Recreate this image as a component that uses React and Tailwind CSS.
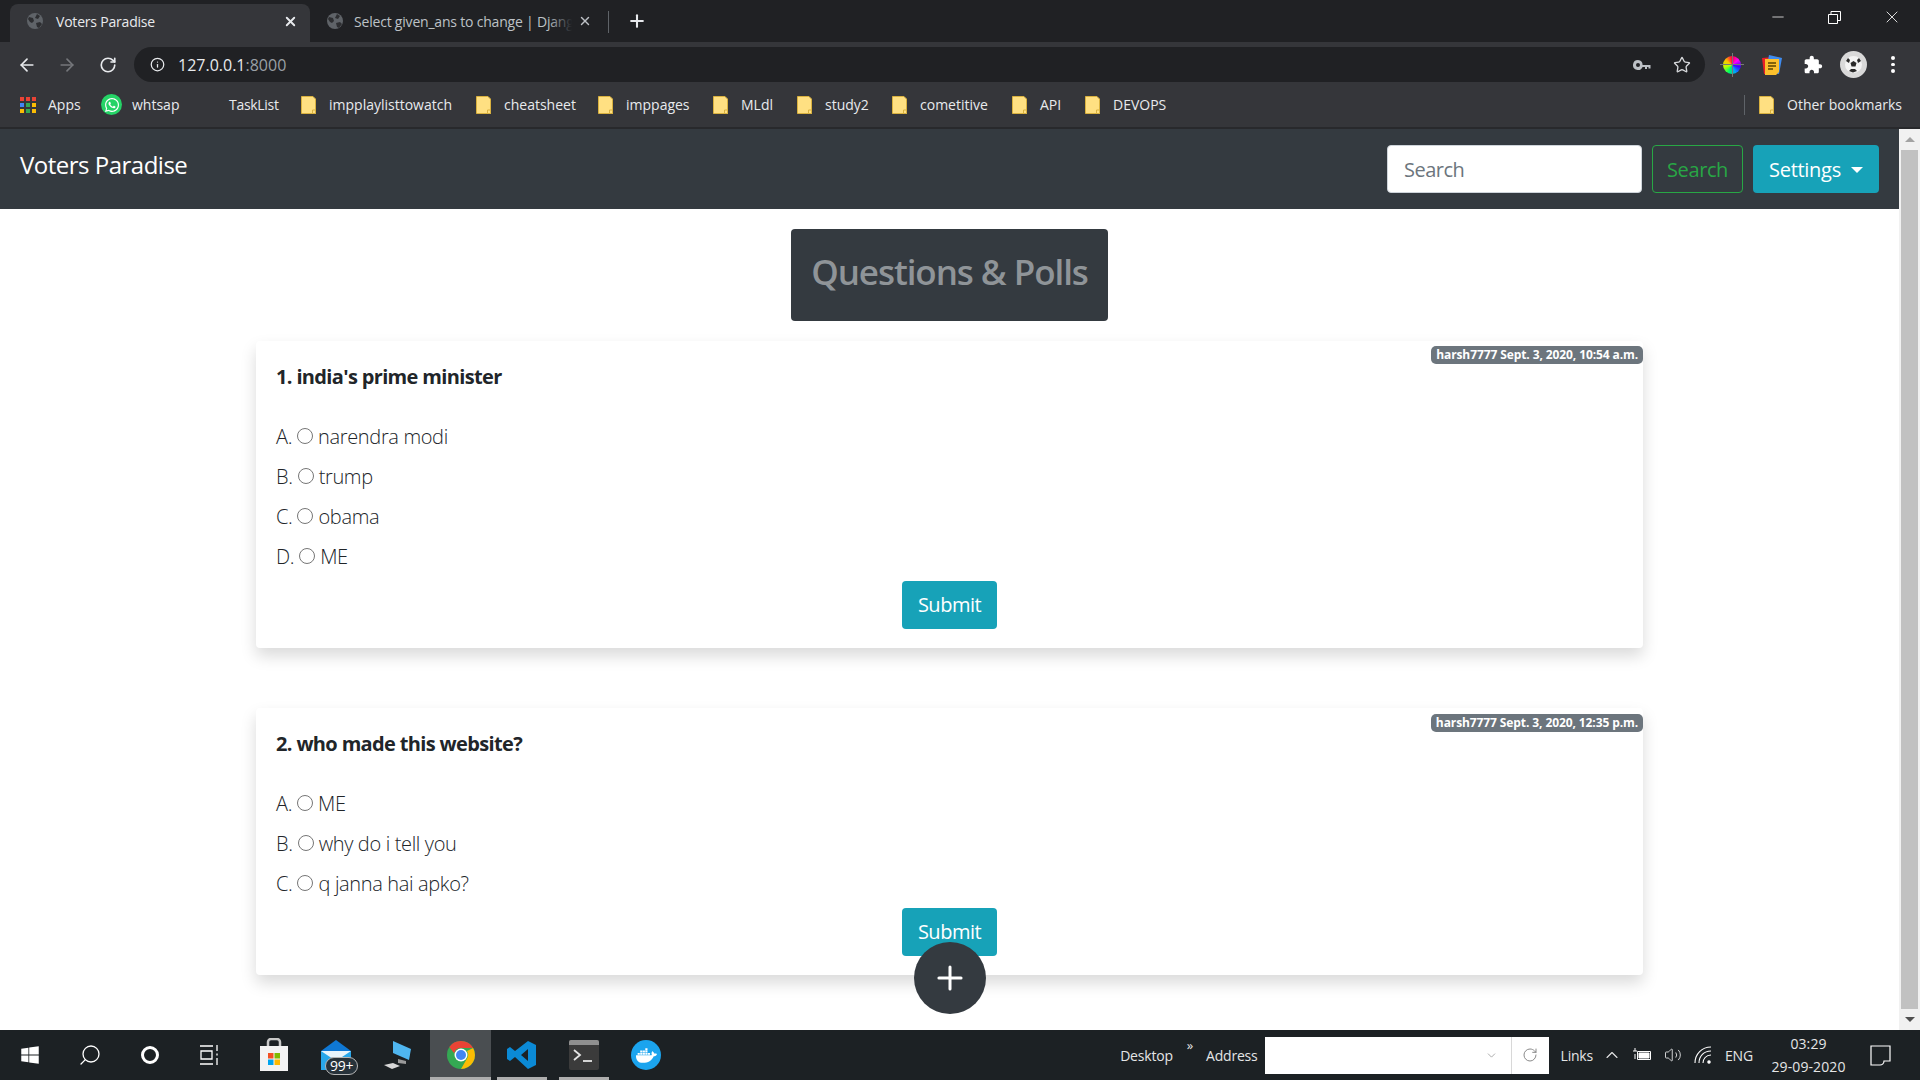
import React from 'react';
import { ArrowLeft, ArrowRight, RotateCw, Info, Star, Plus, X, Minus, Search, ChevronUp, ChevronDown, Volume2 } from 'lucide-react';
import { FaWhatsapp, FaWindows, FaDocker } from 'react-icons/fa';

const Globe = () => (
  <svg width="18" height="18" viewBox="0 0 18 18" className="shrink-0">
    <circle cx="9" cy="9" r="8" fill="#5f6368" />
    <path d="M3 5l4 1 1 3-2 2-2-1-2-3zM11 2l3 2-2 3-3-1zM10 11l4-1 2 2-3 4-2-1z" fill="#2d2e31" />
  </svg>
);

const Folder = () => (
  <svg width="15" height="18" viewBox="0 0 15 18" className="shrink-0">
    <path d="M.5.5h11.500l2.500 2.500v14.500h-14z" fill="#ffe082" stroke="#d9b13f" />
    <path d="M11.500 14h3v3.500h-3z" fill="#ffe082" stroke="#d9b13f" />
  </svg>
);

const bookmarks = [
  { label: 'impplaylisttowatch', w: 'w-[175px]' },
  { label: 'cheatsheet', w: 'w-[122px]' },
  { label: 'imppages', w: 'w-[115px]' },
  { label: 'MLdl', w: 'w-[84px]' },
  { label: 'study2', w: 'w-[95px]' },
  { label: 'cometitive', w: 'w-[120px]' },
  { label: 'API', w: 'w-[73px]' },
  { label: 'DEVOPS', w: 'w-[100px]' },
];

const AppsIcon = () => {
  const colors = ['bg-[#ea4335]', 'bg-[#ea4335]', 'bg-[#ea4335]', 'bg-[#4285f4]', 'bg-[#34a853]', 'bg-[#fbbc04]', 'bg-[#fbbc04]', 'bg-[#34a853]', 'bg-[#fbbc04]'];
  return (
    <div className="grid h-4 w-4 grid-cols-3 gap-[2px]">
      {colors.map((c, i) => <span key={i} className={c} />)}
    </div>
  );
};

function ChromeBar() {
  return (
    <div className="shrink-0 text-[#e8eaed]">
      <div className="flex h-[42px] items-end bg-[#202124] pl-[10px]">
        <div className="flex h-[38px] w-[300px] items-center rounded-t-lg bg-[#35363a] pb-[4px] pl-4 pr-3 text-[14px]">
          <Globe />
          <span className="ml-3 flex-1 tracking-[-0.2px]">Voters Paradise</span>
          <X size={15} strokeWidth={3} />
        </div>
        <div className="flex h-[38px] w-[298px] items-center pb-[4px] pl-4 pr-4 text-[14px] text-[#bdc1c6]">
          <Globe />
          <span className="relative ml-2.5 w-[218px] overflow-hidden whitespace-nowrap tracking-[-0.2px]">
            Select given_ans to change | Django site admin
            <span className="absolute inset-y-0 right-0 w-6 bg-gradient-to-r from-transparent to-[#202124]" />
          </span>
          <X size={14} strokeWidth={2.500} className="ml-auto" />
        </div>
        <div className="mb-[9px] h-[22px] w-px bg-[#5f6368]" />
        <div className="flex h-[38px] w-[56px] items-center justify-center pb-[4px]">
          <Plus size={20} strokeWidth={2.500} />
        </div>
        <div className="ml-auto flex h-[34px] self-start text-white">
          <div className="flex w-[57px] items-center justify-center"><Minus size={18} strokeWidth={1} /></div>
          <div className="flex w-[57px] items-center justify-center">
            <svg width="13" height="13" viewBox="0 0 13 13" fill="none" stroke="#fff"><path d="M.5 3.500h9v9h-9zM3 3.500v-3h9.500v9h-3" /></svg>
          </div>
          <div className="flex w-[57px] items-center justify-center"><X size={20} strokeWidth={1} /></div>
        </div>
      </div>

      <div className="flex h-[40px] items-center bg-[#35363a] pt-[5px]">
        <div className="flex w-[134px] items-center">
          <ArrowLeft size={20} strokeWidth={2} className="ml-[17px]" />
          <ArrowRight size={20} strokeWidth={2} className="ml-[20px] text-[#75777b]" />
          <RotateCw size={18} strokeWidth={2.200} className="ml-[22px]" />
        </div>
        <div className="flex h-[35px] w-[1571px] items-center rounded-full bg-[#202124] pl-[16px] pr-[14px]">
          <Info size={15} strokeWidth={2} />
          <span className="ml-[13px] text-[16px]">127.0.0.1<span className="text-[#9aa0a6]">:8000</span></span>
          <svg width="19" height="12" viewBox="0 0 19 12" className="ml-auto" fill="#bdc1c6">
            <path d="M5 1a5 5 0 1 0 4.600 7H12v2h2V8h1.500v1.500h2V6H9.600A5 5 0 0 0 5 1zm0 3a2 2 0 1 1 0 4 2 2 0 0 1 0-4z" />
          </svg>
          <Star size={18} strokeWidth={1.800} className="ml-[21px] text-[#d5d7da]" />
        </div>
        <div className="flex flex-1 items-center">
          <div className="relative ml-[18px] h-[18px] w-[18px] rounded-full bg-[conic-gradient(#ff0040,#ff00ff,#4000ff,#00a0ff,#00ff60,#c0ff00,#ffc000,#ff0040)]">
            <span className="absolute -left-[3px] top-[8.500px] h-px w-[24px] bg-[#777]" />
            <span className="absolute -top-[3px] left-[8.500px] h-[24px] w-px bg-[#777]" />
          </div>
          <svg width="20" height="20" viewBox="0 0 20 20" className="ml-[21px]">
            <path d="M0 3l12-1 2 16-12 1z" fill="#ea2027" />
            <path d="M7 0l13 3-3 16-13-2z" fill="#3f8cf0" />
            <path d="M3 4h14v13l-3 3H3z" fill="#fbc02d" />
            <path d="M6 8h8M6 11h8M6 14h5" stroke="#5d4500" strokeWidth="1.400" />
          </svg>
          <svg width="20" height="20" viewBox="0 0 24 24" fill="#fff" className="ml-[21px]">
            <path d="M20.500 11H19V7c0-1.100-.9-2-2-2h-4V3.500C13 2.120 11.880 1 10.500 1S8 2.120 8 3.500V5H4c-1.100 0-1.990.9-1.990 2v3.800H3.500c1.490 0 2.700 1.210 2.700 2.700s-1.210 2.700-2.700 2.700H2V20c0 1.100.9 2 2 2h3.800v-1.500c0-1.490 1.210-2.700 2.700-2.700 1.490 0 2.700 1.210 2.700 2.700V22H17c1.100 0 2-.9 2-2v-4h1.500c1.380 0 2.500-1.120 2.500-2.500S21.880 11 20.500 11z" />
          </svg>
          <svg width="27" height="27" viewBox="0 0 27 27" className="ml-[17px]">
            <circle cx="13.500" cy="13.500" r="13.500" fill="#d9d9d9" />
            <circle cx="13.500" cy="13.500" r="8.500" fill="#f4f4f4" />
            <path d="M13.500 10l3 2-1 3.500h-4l-1-3.500zM6 10l2-3 2 2-1 3zM21 10l-2-3-2 2 1 3zM9 20l2-2 4 0 2 2-4 1.500z" fill="#2a2a2a" />
          </svg>
          <div className="ml-[24px] flex flex-col gap-[3px]">
            <span className="h-[3.500px] w-[3.500px] rounded-full bg-white" />
            <span className="h-[3.500px] w-[3.500px] rounded-full bg-white" />
            <span className="h-[3.500px] w-[3.500px] rounded-full bg-white" />
          </div>
        </div>
      </div>

      <div className="flex h-[47px] items-center border-b-2 border-[#28292c] bg-[#35363a] text-[14px]">
        <div className="ml-[20px] w-[28px]"><AppsIcon /></div>
        <span className="w-[53px]">Apps</span>
        <div className="flex h-[21px] w-[21px] items-center justify-center rounded-full bg-[#25d366]">
          <FaWhatsapp size={16} className="text-white" />
        </div>
        <span className="ml-[10px] w-[97px]">whtsap</span>
        <span className="w-[72px] tracking-[-0.3px]">TaskList</span>
        {bookmarks.map((b) => (
          <div key={b.label} className={`flex items-center gap-[13px] ${b.w}`}>
            <Folder />
            <span className="whitespace-nowrap">{b.label}</span>
          </div>
        ))}
        <div className="ml-auto flex items-center">
          <div className="mr-[14px] h-[20px] w-px bg-[#5f6368]" />
          <Folder />
          <span className="ml-[13px] mr-[18px] whitespace-nowrap">Other bookmarks</span>
        </div>
      </div>
    </div>
  );
}

function Navbar() {
  return (
    <nav className="flex h-[80px] shrink-0 items-start justify-between bg-[#343a40] pl-5 pr-5">
      <a className="mt-[20px] text-[24px] leading-[32px] tracking-[-0.5px] text-white">Voters Paradise</a>
      <div className="mt-4 flex items-center gap-[10px]">
        <input
          placeholder="Search"
          className="h-12 w-[255px] rounded border border-[#ced4da] bg-white px-4 text-[20px] tracking-[-0.5px] text-[#495057] outline-none placeholder:text-[#6c757d]"
        />
        <button type="button" className="h-12 w-[91px] rounded border border-[#28a745] pt-[1px] text-[20px] tracking-[-0.4px] text-[#28a745]">
          Search
        </button>
        <button type="button" className="flex h-12 w-[126px] items-center justify-center gap-[10px] rounded bg-[#17a2b8] pt-[1px] text-[20px] tracking-[-0.3px] text-white">
          Settings
          <span className="h-0 w-0 border-x-[6px] border-t-[6px] border-x-transparent border-t-white" />
        </button>
      </div>
    </nav>
  );
}

const polls = [
  {
    title: "1. india's prime minister",
    badge: 'harsh7777 Sept. 3, 2020, 10:54 a.m.',
    badgeTop: 'top-[5px]',
    options: ['narendra modi', 'trump', 'obama', 'ME'],
  },
  {
    title: '2. who made this website?',
    badge: 'harsh7777 Sept. 3, 2020, 12:35 p.m.',
    badgeTop: 'top-[6px]',
    options: ['ME', 'why do i tell you', 'q janna hai apko?'],
  },
];

function PollCard({ poll }) {
  return (
    <div className="relative w-[1387px] rounded bg-white px-5 pb-[19px] pt-[21px] shadow-[0_8px_16px_rgba(0,0,0,0.15)]">
      <span className={`absolute right-0 whitespace-nowrap rounded-[5px] bg-[#6c757d] px-[5px] text-[12px] font-bold leading-[18px] tracking-[-0.1px] text-white ${poll.badgeTop}`}>
        {poll.badge}
      </span>
      <h5 className="text-[20px] font-bold leading-[30px] tracking-[-0.65px] text-[#212529]">{poll.title}</h5>
      <div className="mt-[25px]">
        {poll.options.map((opt, i) => (
          <div key={opt} className="flex h-10 items-center text-[20px] font-light tracking-[-0.35px] text-[#212529]">
            <span>{String.fromCharCode(65 + i)}.</span>
            <input type="radio" name={poll.title} className="mx-[5px] mb-[2px] h-4 w-4" />
            <label>{opt}</label>
          </div>
        ))}
      </div>
      <div className="mt-[4px] flex justify-center">
        <button type="button" className="h-12 w-[95px] rounded bg-[#17a2b8] text-[20px] tracking-[-0.5px] text-white">Submit</button>
      </div>
    </div>
  );
}

function Scrollbar() {
  return (
    <div className="flex w-[21px] shrink-0 flex-col items-center bg-[#f1f1f1]">
      <div className="flex h-[21px] shrink-0 items-center justify-center">
        <span className="h-0 w-0 border-x-[5px] border-b-[5px] border-x-transparent border-b-[#a3a3a3]" />
      </div>
      <div className="w-[17px] flex-1 bg-[#c1c1c1]" />
      <div className="flex h-[21px] shrink-0 items-center justify-center">
        <span className="h-0 w-0 border-x-[5px] border-t-[5px] border-x-transparent border-t-[#505050]" />
      </div>
    </div>
  );
}

const tiles = [
  { w: 'w-[60px]', icon: <FaWindows size={20} className="text-white" /> },
  { w: 'w-[60px]', icon: <Search size={24} strokeWidth={1.300} className="-scale-x-100 text-white" /> },
  { w: 'w-[60px]', icon: <span className="h-[18px] w-[18px] rounded-full border-[3px] border-white" /> },
  {
    w: 'w-[60px]',
    icon: (
      <svg width="20" height="20" viewBox="0 0 20 20" fill="none" stroke="#fff" strokeWidth="1.300">
        <path d="M0 1h13M0 19h13M1 6h11v8H1zM17 0v6M17 8.500v2M17 13v7" />
      </svg>
    ),
  },
  {
    w: 'w-[68px]',
    icon: (
      <svg width="30" height="34" viewBox="0 0 30 34">
        <path d="M9 9V4a3 3 0 0 1 3-3h6a3 3 0 0 1 3 3v5" fill="none" stroke="#c9c9c9" strokeWidth="2.500" />
        <path d="M1 8h28v25H1z" fill="#f3f3f3" />
        <path d="M9 15h5.500v5.500H9z" fill="#f25022" />
        <path d="M15.500 15H21v5.500h-5.500z" fill="#7fba00" />
        <path d="M9 21.500h5.500V27H9z" fill="#00a4ef" />
        <path d="M15.500 21.500H21V27h-5.500z" fill="#ffb900" />
      </svg>
    ),
  },
  {
    w: 'w-[58px]',
    icon: (
      <div className="relative ml-[6px] h-[30px] w-[32px]">
        <svg width="32" height="30" viewBox="0 0 32 30" className="-translate-x-[3px]">
          <path d="M0 11L15 0l15 11v19H0z" fill="#0f78d4" />
          <path d="M0 11h30v19H0z" fill="#29a7ea" />
          <path d="M0 11h30L15 21z" fill="#e8f4fc" />
        </svg>
        <span className="absolute -bottom-[5px] left-[1px] whitespace-nowrap rounded-full border border-[#b5b5b5] bg-[#27323a] px-[4px] text-[14px] leading-[16px] text-white">99+</span>
      </div>
    ),
  },
  {
    w: 'w-[64px]',
    icon: (
      <svg width="28" height="30" viewBox="0 0 28 30">
        <path d="M9 1l18 8-2 11L9 13z" fill="#4fb6f0" />
        <path d="M14 19l8 2v3l-8-1z" fill="#9a9a9a" />
        <path d="M0 25l9-2 7 3-8 3z" fill="#d8d8d8" />
      </svg>
    ),
  },
  {
    w: 'w-[61px]',
    active: true,
    icon: (
      <svg width="28" height="28" viewBox="0 0 28 28">
        <circle cx="14" cy="14" r="14" fill="#34a853" />
        <path d="M14 0a14 14 0 0 1 12.100 7H14a7 7 0 0 0-6.800 5.300L2.300 6A14 14 0 0 1 14 0z" fill="#ea4335" />
        <path d="M26.100 7A14 14 0 0 1 14 28l6-10.500A7 7 0 0 0 20 10z" fill="#fbbc04" />
        <circle cx="14" cy="14" r="6.500" fill="#fff" />
        <circle cx="14" cy="14" r="5" fill="#4285f4" />
      </svg>
    ),
  },
  {
    w: 'w-[62px]',
    line: true,
    icon: (
      <svg width="30" height="30" viewBox="0 0 30 30">
        <path d="M21 1l8 4v20l-8 4-13-12-5 4-3-2v-10l3-2 5 4zM21 9l-7 6 7 6z" fill="#0b8ad6" fillRule="evenodd" />
      </svg>
    ),
  },
  {
    w: 'w-[62px]',
    line: true,
    icon: (
      <svg width="30" height="30" viewBox="0 0 30 30">
        <rect width="30" height="30" rx="2" fill="#3b3b3b" />
        <path d="M0 2a2 2 0 0 1 2-2h26a2 2 0 0 1 2 2v3H0z" fill="#8f8f8f" />
        <path d="M5 10l6 5-6 5" fill="none" stroke="#e5e5e5" strokeWidth="1.800" />
        <path d="M14 21h9" stroke="#e5e5e5" strokeWidth="1.800" />
      </svg>
    ),
  },
  {
    w: 'w-[62px]',
    icon: (
      <div className="flex h-[30px] w-[30px] items-center justify-center rounded-full bg-[#1ba4ee]">
        <FaDocker size={21} className="text-white" />
      </div>
    ),
  },
];

function Taskbar() {
  return (
    <div className="flex h-[50px] shrink-0 items-stretch bg-[#1c2124] text-[14px] tracking-[-0.2px] text-[#e4e5e6]">
      {tiles.map((t, i) => (
        <div key={i} className={`relative flex items-center justify-center ${t.w} ${t.active ? 'bg-[#4a4e51]' : ''}`}>
          {t.icon}
          {(t.active || t.line) && <span className={`absolute bottom-0 h-[3px] bg-[#aeaeae] ${t.active ? 'inset-x-0' : 'inset-x-[6px]'}`} />}
        </div>
      ))}
      <div className="ml-auto flex items-center">
        <span>Desktop</span>
        <span className="mb-[20px] ml-[14px] text-[13px] leading-none">»</span>
        <span className="ml-[13px]">Address</span>
        <div className="ml-[7px] flex h-[37px] w-[284px] items-center bg-white text-[#8a8a8a]">
          <div className="flex flex-1 justify-end pr-[13px]"><ChevronDown size={13} strokeWidth={1.300} /></div>
          <div className="flex h-full w-[38px] items-center justify-center border-l border-[#d8d8d8]"><RotateCw size={16} strokeWidth={1.500} /></div>
        </div>
        <span className="ml-[12px]">Links</span>
        <ChevronUp size={20} strokeWidth={1.300} className="ml-[9px]" />
        <svg width="18" height="14" viewBox="0 0 18 14" className="ml-[11px]" fill="none" stroke="#fff">
          <path d="M4.500 3.500h13v8h-13z" /><path d="M6 5h10v5H6zM0 3h4M2 0v3M2 6v5" fill="#fff" />
        </svg>
        <Volume2 size={18} strokeWidth={1.200} className="ml-[13px]" />
        <svg width="18" height="18" viewBox="0 0 18 18" className="ml-[12px]" fill="none" stroke="#fff" strokeWidth="1.100">
          <path d="M1 17C1 8 8 1 17 1M5 17C5 10 10 5 17 5M9 17c0-4 3-8 8-8" /><circle cx="15" cy="16" r="1.200" fill="#fff" />
        </svg>
        <span className="ml-[13px] w-[30px] whitespace-nowrap">ENG</span>
        <div className="ml-[13px] flex w-[81px] flex-col items-center leading-[23px] tracking-[0.1px]">
          <span>03:29</span>
          <span>29-09-2020</span>
        </div>
        <svg width="21" height="21" viewBox="0 0 21 21" className="ml-[21px] mr-[29px]" fill="none" stroke="#fff" strokeWidth="1.200">
          <path d="M1 1h19v15h-6a4 4 0 0 1-4 4H1z" />
        </svg>
      </div>
    </div>
  );
}

export default function App() {
  return (
    <div className="flex h-screen flex-col overflow-hidden bg-white font-['Open_Sans',sans-serif]">
      <ChromeBar />
      <div className="flex min-h-0 flex-1">
        <div className="relative flex min-w-0 flex-1 flex-col overflow-hidden">
          <Navbar />
          <main className="flex flex-col items-center pt-5">
            <h1 className="rounded bg-[#343a40] px-5 pb-[26px] pt-[20px] text-[35px] font-semibold leading-[46px] tracking-[-1.06px] text-[#8f9498]">
              Questions &amp; Polls
            </h1>
            <div className="mt-[20px] flex flex-col gap-[60px]">
              {polls.map((p) => <PollCard key={p.title} poll={p} />)}
            </div>
          </main>
          <button type="button" className="absolute bottom-4 left-1/2 flex h-[72px] w-[72px] -translate-x-1/2 items-center justify-center rounded-full bg-[#343a40] text-white">
            <Plus size={38} strokeWidth={1.900} />
          </button>
        </div>
        <Scrollbar />
      </div>
      <Taskbar />
    </div>
  );
}
